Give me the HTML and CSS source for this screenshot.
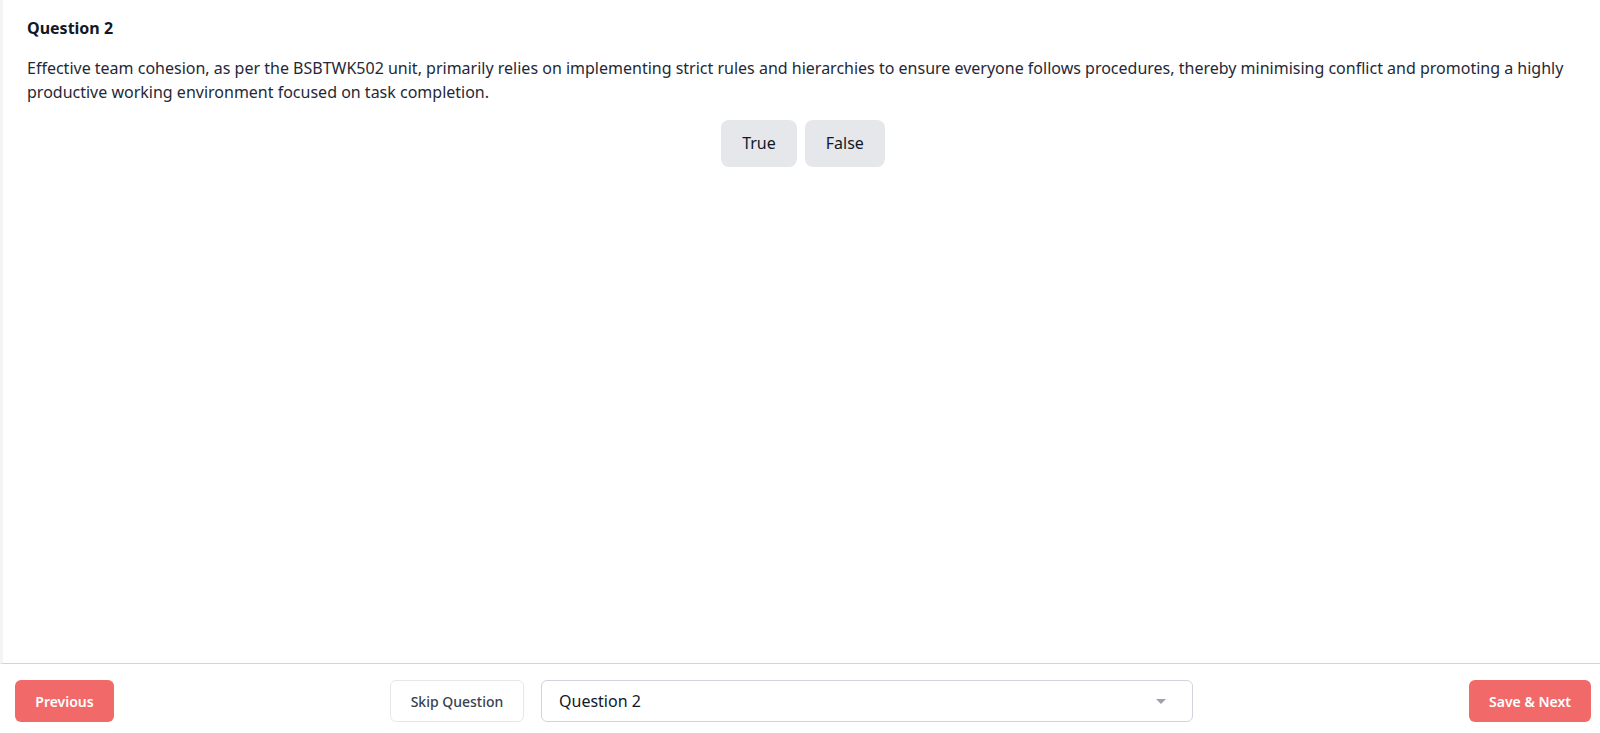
FILE: index.html
```html
<!DOCTYPE html>
<html lang="en">
<head>
<meta charset="utf-8">
<title>Question 2</title>
<link rel="stylesheet" href="styles.css">
</head>
<body>
<div class="page">
  <main class="content">
    <h2 class="q-title">Question 2</h2>
    <p class="q-text">Effective team cohesion, as per the BSBTWK502 unit, primarily relies on implementing strict rules and hierarchies to ensure everyone follows procedures, thereby minimising conflict and promoting a highly productive working environment focused on task completion.</p>
    <div class="answers">
      <button class="answer" type="button">True</button>
      <button class="answer" type="button">False</button>
    </div>
  </main>
  <footer class="footer">
    <button class="btn btn-primary btn-prev" type="button">Previous</button>
    <div class="center-group">
      <button class="btn btn-outline" type="button">Skip Question</button>
      <div class="select">
        <span class="select-value">Question 2</span>
        <span class="caret"></span>
      </div>
    </div>
    <button class="btn btn-primary btn-next" type="button">Save &amp; Next</button>
  </footer>
</div>
</body>
</html>
```

FILE: styles.css
```css
* { box-sizing: border-box; }
html, body {
  margin: 0;
  padding: 0;
  height: 100%;
  background: #ffffff;
  font-family: "Noto Sans", "Open Sans", sans-serif;
  color: #1f2937;
}
.page {
  height: 100vh;
  display: flex;
  flex-direction: column;
}
.content {
  flex: 1;
  border-left: 3px solid #f3f4f6;
  padding: 16px 24px 0 24px;
  border-bottom: 1px solid #d4d4d8;
}
.q-title {
  margin: 0;
  font-size: 16px;
  line-height: 24px;
  font-weight: 700;
  color: #111827;
}
.q-text {
  margin: 16px 0 0 0;
  font-size: 16px;
  line-height: 24px;
  color: #1f2937;
}
.answers {
  display: flex;
  justify-content: center;
  gap: 8px;
  margin-top: 16px;
  padding-left: 3px;
}
.answer {
  font-family: inherit;
  font-size: 16px;
  line-height: 23px;
  padding: 12px 21px;
  border: none;
  border-radius: 8px;
  background: #e5e7eb;
  color: #111827;
}
.footer {
  height: 69px;
  flex: none;
  display: flex;
  justify-content: space-between;
  align-items: flex-start;
  padding: 16px 9px 0 15px;
}
.btn {
  font-family: inherit;
  height: 42px;
  border-radius: 6px;
  font-size: 14px;
  padding: 0;
  white-space: nowrap;
  text-align: center;
}
.btn-primary {
  background: #f26969;
  color: #ffffff;
  border: none;
  font-weight: 600;
}
.btn-prev { width: 99px; }
.btn-next { width: 122px; }
.btn-outline {
  width: 134px;
  background: #ffffff;
  border: 1px solid #e5e7eb;
  color: #374151;
  font-weight: 500;
}
.center-group {
  display: flex;
  gap: 17px;
}
.select {
  width: 652px;
  height: 42px;
  border: 1px solid #d1d5db;
  border-radius: 6px;
  display: flex;
  align-items: center;
  justify-content: space-between;
  padding: 0 26px 0 17px;
  font-size: 16px;
  color: #111827;
}
.caret {
  width: 0;
  height: 0;
  border-left: 5px solid transparent;
  border-right: 5px solid transparent;
  border-top: 5px solid #9ca3af;
}
```
